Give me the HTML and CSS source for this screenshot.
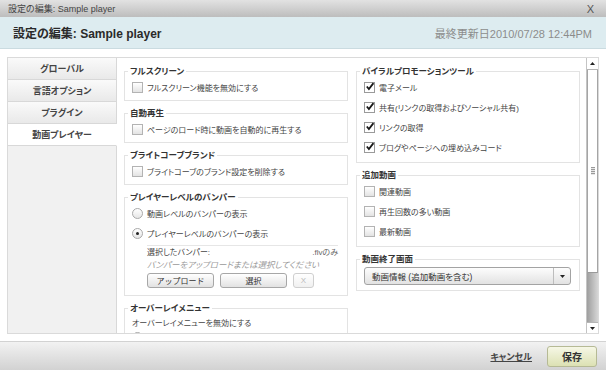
FILE: index.html
```html
<!DOCTYPE html>
<html lang="ja">
<head>
<meta charset="utf-8">
<title>設定の編集: Sample player</title>
<link rel="stylesheet" href="styles.css">
</head>
<body>
<div class="dialog">
  <div class="titlebar">
    <span class="tb-title">設定の編集: Sample player</span>
    <span class="tb-close">X</span>
  </div>
  <div class="header">
    <h1 class="h-title">設定の編集: Sample player</h1>
    <span class="h-date">最終更新日2010/07/28 12:44PM</span>
  </div>
  <div class="main">
    <div class="panel">
      <nav class="tabs">
        <div class="tab">グローバル</div>
        <div class="tab">言語オプション</div>
        <div class="tab">プラグイン</div>
        <div class="tab active">動画プレイヤー</div>
        <div class="tab-fill"></div>
      </nav>
      <div class="content">
        <div class="col">
          <fieldset class="fs">
            <legend>フルスクリーン</legend>
            <label class="row"><span class="cb"></span>フルスクリーン機能を無効にする</label>
          </fieldset>
          <fieldset class="fs">
            <legend>自動再生</legend>
            <label class="row"><span class="cb"></span>ページのロード時に動画を自動的に再生する</label>
          </fieldset>
          <fieldset class="fs">
            <legend>ブライトコーブブランド</legend>
            <label class="row"><span class="cb"></span>ブライトコーブのブランド設定を削除する</label>
          </fieldset>
          <fieldset class="fs">
            <legend>プレイヤーレベルのバンパー</legend>
            <label class="row"><span class="rb"></span>動画レベルのバンパーの表示</label>
            <label class="row"><span class="rb on"></span>プレイヤーレベルのバンパーの表示</label>
            <div class="bumper">
              <div class="bumper-head"><span>選択したバンパー:</span><span class="flv">.flvのみ</span></div>
              <div class="bumper-hint">バンパーをアップロードまたは選択してください</div>
              <div class="btns">
                <button class="btn">アップロード</button>
                <button class="btn">選択</button>
                <button class="btn btn-x" disabled>X</button>
              </div>
            </div>
          </fieldset>
          <fieldset class="fs">
            <legend>オーバーレイメニュー</legend>
            <div class="row plain">オーバーレイメニューを無効にする</div>
            <div class="row peek"><span class="rb"></span></div>
          </fieldset>
        </div>
        <div class="col right">
          <fieldset class="fs">
            <legend>バイラルプロモーションツール</legend>
            <label class="row"><span class="cb on"><svg viewBox="0 0 11 11" width="11" height="11"><path d="M2 5.5 L4.3 8.3 L9.3 1.8" fill="none" stroke="#1a1a1a" stroke-width="2"/></svg></span>電子メール</label>
            <label class="row"><span class="cb on"><svg viewBox="0 0 11 11" width="11" height="11"><path d="M2 5.5 L4.3 8.3 L9.3 1.8" fill="none" stroke="#1a1a1a" stroke-width="2"/></svg></span>共有(リンクの取得およびソーシャル共有)</label>
            <label class="row"><span class="cb on"><svg viewBox="0 0 11 11" width="11" height="11"><path d="M2 5.5 L4.3 8.3 L9.3 1.8" fill="none" stroke="#1a1a1a" stroke-width="2"/></svg></span>リンクの取得</label>
            <label class="row"><span class="cb on"><svg viewBox="0 0 11 11" width="11" height="11"><path d="M2 5.5 L4.3 8.3 L9.3 1.8" fill="none" stroke="#1a1a1a" stroke-width="2"/></svg></span>ブログやページへの埋め込みコード</label>
          </fieldset>
          <fieldset class="fs">
            <legend>追加動画</legend>
            <label class="row"><span class="cb"></span>関連動画</label>
            <label class="row"><span class="cb"></span>再生回数の多い動画</label>
            <label class="row"><span class="cb"></span>最新動画</label>
          </fieldset>
          <fieldset class="fs">
            <legend>動画終了画面</legend>
            <div class="select">
              <span class="select-text">動画情報 (追加動画を含む)</span>
              <span class="select-arrow"><svg viewBox="0 0 5 3" width="5" height="3"><path d="M0 0 H5 L2.5 3 Z" fill="#222"/></svg></span>
            </div>
          </fieldset>
        </div>
      </div>
      <div class="scrollbar">
        <div class="sb-btn"><svg viewBox="0 0 5 3" width="5" height="3"><path d="M0 3 H5 L2.5 0 Z" fill="#222"/></svg></div>
        <div class="sb-thumb"><span class="grip"></span></div>
        <div class="sb-track"></div>
        <div class="sb-btn down"><svg viewBox="0 0 5 3" width="5" height="3"><path d="M0 0 H5 L2.5 3 Z" fill="#222"/></svg></div>
      </div>
    </div>
  </div>
  <div class="footer">
    <a class="cancel" href="#">キャンセル</a>
    <button class="save">保存</button>
  </div>
</div>
</body>
</html>
```

FILE: styles.css
```css
* { box-sizing: border-box; }
html, body { margin: 0; padding: 0; }
body {
  width: 606px;
  height: 370px;
  overflow: hidden;
  background: #fff;
  color: #333;
  font-family: "Liberation Sans", "Noto Sans CJK JP", sans-serif;
  font-size: 8px;
  font-feature-settings: "palt";
}
.dialog { display: flex; flex-direction: column; height: 370px; }

.titlebar {
  height: 17px;
  flex: none;
  display: flex;
  align-items: center;
  justify-content: space-between;
  padding: 0 12px 0 8px;
  background: linear-gradient(#e2e2e2, #bdbdbd);
  color: #444;
  font-size: 9px;
}
.tb-close { font-size: 11px; color: #555; }

.header {
  height: 32px;
  flex: none;
  display: flex;
  align-items: center;
  justify-content: space-between;
  padding: 0 14px 0 13px;
  background: #ddecf0;
  border-bottom: 1px solid #cadbe0;
}
.h-title { margin: 0; font-size: 12px; font-weight: bold; color: #2a2a2a; }
.h-date { font-size: 11px; color: #8c8c8c; }

.main { flex: 1; padding: 8px 7px 7px; }
.panel { display: flex; height: 277px; border: 1px solid #dadada; }

.tabs { width: 109px; flex: none; display: flex; flex-direction: column; }
.tab {
  height: 22px;
  flex: none;
  display: flex;
  align-items: center;
  justify-content: center;
  border-bottom: 1px solid #d8d8d8;
  border-right: 1px solid #d8d8d8;
  background: linear-gradient(#fafafa, #e9e9e9);
  font-size: 9px;
  font-weight: bold;
  color: #444;
}
.tab.active { background: #fff; border-right-color: #fff; }
.tab-fill { flex: 1; background: #f1f1f1; border-right: 1px solid #d8d8d8; }

.content {
  width: 469px;
  flex: none;
  display: flex;
  align-items: flex-start;
  gap: 8px;
  padding: 7px 0 0 7px;
  overflow: hidden;
}
.col { width: 224px; flex: none; display: flex; flex-direction: column; gap: 6px; }

.fs {
  margin: 0;
  min-width: 0;
  padding: 0 6px 3px 3px;
  border: 1px solid #e3e3e3;
}
.fs legend {
  padding: 0 2px;
  font-size: 8.5px;
  font-weight: bold;
  line-height: 12px;
  color: #333;
}
.row {
  display: flex;
  align-items: center;
  gap: 4px;
  height: 20px;
  padding-left: 4px;
  color: #444;
}
.right .fs { padding-bottom: 5px; }

.cb {
  width: 11px;
  height: 11px;
  flex: none;
  border: 1px solid #b3b3b3;
  background: linear-gradient(#ffffff, #e3e3e3);
  display: flex;
  align-items: center;
  justify-content: center;
}
.cb.on { background: #fff; border-color: #9a9a9a; }
.cb svg { display: block; margin: -1px -1px 0 0; }

.rb {
  width: 11px;
  height: 11px;
  flex: none;
  border: 1px solid #a9a9a9;
  border-radius: 50%;
  background: linear-gradient(#ffffff, #e6e6e6);
  position: relative;
}
.rb.on::after {
  content: "";
  position: absolute;
  left: 3px;
  top: 3px;
  width: 3px;
  height: 3px;
  border-radius: 50%;
  background: #222;
}

.bumper {
  margin: 2px 3px 0 19px;
  border-top: 1px solid #e6e6e6;
  padding-top: 1px;
  color: #444;
}
.bumper-head { display: flex; justify-content: space-between; line-height: 12px; }
.flv { color: #666; }
.bumper-hint { line-height: 12px; font-size: 8.5px; font-style: italic; color: #9a9a9a; }
.btns { display: flex; gap: 6px; margin-top: 2px; padding-bottom: 4px; }
.btn {
  width: 67px;
  height: 15px;
  padding: 0;
  border: 1px solid #a7a7a7;
  border-radius: 3px;
  background: linear-gradient(#ffffff, #e2e2e2);
  font-family: inherit;
  font-size: 8px;
  color: #333;
}
.btn-x { width: 21px; border-color: #cfcfcf; color: #bbb; background: linear-gradient(#ffffff, #f0f0f0); }

.plain { height: 16px; padding-left: 4px; }
.peek { align-items: flex-start; padding-top: 2px; }

.select {
  display: flex;
  height: 18px;
  margin: 2px 2px 0 4px;
  border: 1px solid #a3a3a3;
  border-radius: 3px;
  background: linear-gradient(#fdfdfd, #e2e2e2);
}
.select-text { flex: 1; display: flex; align-items: center; padding-left: 7px; color: #333; font-size: 8.5px; }
.select-arrow {
  width: 17px;
  display: flex;
  align-items: center;
  justify-content: center;
  border-left: 1px solid #bdbdbd;
}

.scrollbar {
  width: 12px;
  flex: none;
  display: flex;
  flex-direction: column;
  border-left: 1px solid #c4c4c4;
}
.sb-btn {
  height: 12px;
  flex: none;
  display: flex;
  align-items: center;
  justify-content: center;
  background: #fff;
  border-bottom: 1px solid #b5b5b5;
}
.sb-btn.down { height: 11px; border-bottom: 0; border-top: 1px solid #b5b5b5; }
.sb-thumb {
  height: 203px;
  flex: none;
  display: flex;
  align-items: center;
  justify-content: center;
  background: #fff;
  border-left: 1px solid #a5a5a5;
  border-right: 1px solid #a5a5a5;
  border-bottom: 1px solid #9a9a9a;
}
.grip {
  width: 4px;
  height: 8px;
  background: repeating-linear-gradient(#9a9a9a 0 1px, #e6e6e6 1px 2px);
}
.sb-track { flex: 1; background: linear-gradient(90deg, #9e9e9e, #d6d6d6); }

.footer {
  height: 29px;
  flex: none;
  display: flex;
  align-items: center;
  justify-content: flex-end;
  gap: 15px;
  padding-right: 9px;
  border-top: 1px solid #d2d2d2;
  background: linear-gradient(#f2f2f2, #d2d2d2);
}
.cancel {
  font-size: 9px;
  font-weight: bold;
  color: #444;
  text-decoration: underline;
}
.save {
  width: 50px;
  height: 21px;
  padding: 0;
  border: 1px solid #b6ba95;
  border-radius: 3px;
  background: linear-gradient(#f6f7e6, #dce1b3);
  font-family: inherit;
  font-size: 10px;
  font-weight: bold;
  color: #333;
}
```
